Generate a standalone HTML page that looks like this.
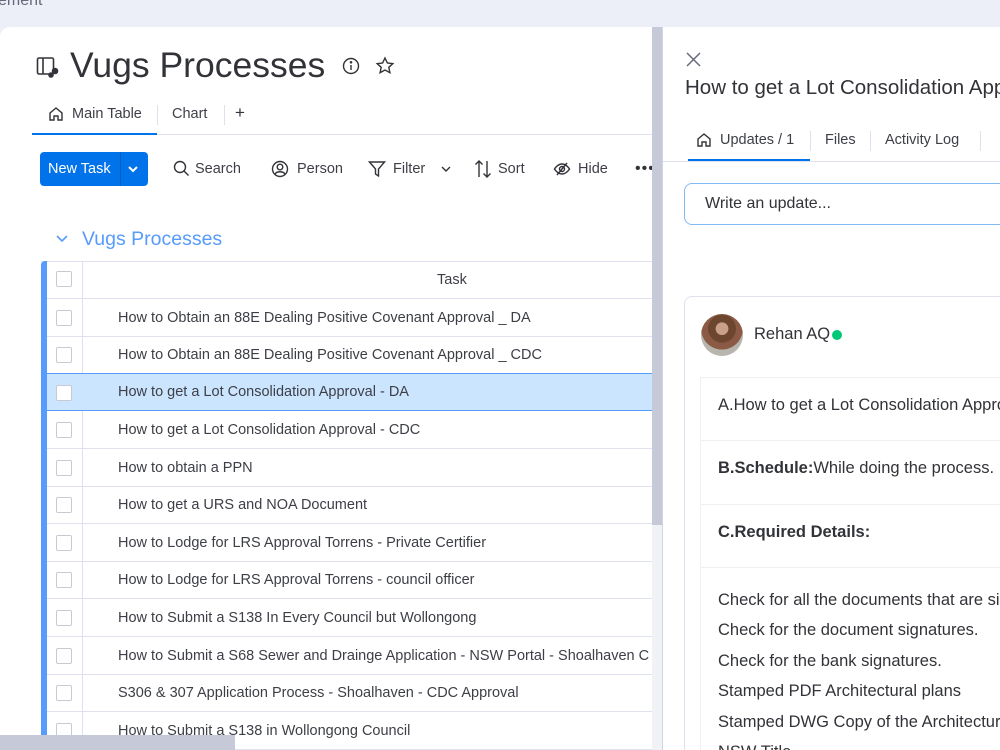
<!DOCTYPE html>
<html style="width:1000px;height:750px;overflow:hidden"><head><style>
*{box-sizing:border-box;margin:0;padding:0}
body{width:1000px;height:750px;overflow:hidden;background:#eceff8;font-family:"Liberation Sans",sans-serif;color:#323338}
#w{position:relative;width:1000px;height:750px;overflow:hidden}
.a{position:absolute}
.main{left:0;top:27px;width:662px;height:723px;background:#fff;border-top-left-radius:10px}
.row{position:absolute;left:41px;width:611px;border-bottom:1px solid #dfe1ee;height:38px;font-size:14.5px;color:#3d3f46}
.row .cb{position:absolute;left:15px;top:11px;width:16px;height:16px;border:1px solid #c7c9d4;border-radius:2px;background:#fff}
.row .div{position:absolute;left:41px;top:0;bottom:0;border-left:1px solid #dfe1ee}
.row .t{position:absolute;left:77px;top:11px;white-space:nowrap}
.tb{font-size:14.5px;color:#3d3f46}
.rp{position:absolute;left:718px;font-size:16.5px;white-space:nowrap;color:#323338}
</style></head><body><div id="w">
<div class="a" style="left:-2px;top:-8px;font-size:16px;color:#676879">ement</div>
<div class="a main"></div>
<svg class="a" style="left:36px;top:56px" width="24" height="22" viewBox="0 0 24 22" fill="none" stroke="#323338" stroke-width="1.6"><rect x="1.5" y="2" width="16" height="16" rx="1.5"/><line x1="7" y1="2" x2="7" y2="18"/><circle cx="19" cy="15" r="2.5" fill="#323338"/><circle cx="15" cy="19" r="2" fill="#323338"/></svg>
<div class="a" style="left:70px;top:45px;font-size:35.5px;color:#323338">Vugs Processes</div>
<svg class="a" style="left:342px;top:57px" width="18" height="18" viewBox="0 0 18 18" fill="none" stroke="#323338" stroke-width="1.4"><circle cx="9" cy="9" r="7.5"/><line x1="9" y1="8" x2="9" y2="13"/><circle cx="9" cy="5.3" r=".6" fill="#323338"/></svg>
<svg class="a" style="left:375px;top:56px" width="20" height="20" viewBox="0 0 20 20" fill="none" stroke="#323338" stroke-width="1.4"><path d="M10 2l2.4 5 5.4.6-4 3.7 1.1 5.4L10 14l-4.9 2.7 1.1-5.4-4-3.7 5.4-.6z"/></svg>
<svg class="a" style="left:48px;top:106px" width="16" height="16" viewBox="0 0 16 16" fill="none" stroke="#323338" stroke-width="1.4"><path d="M2 7l6-5 6 5v7H10V10H6v4H2z"/></svg>
<div class="a tb" style="left:72px;top:106px">Main Table</div>
<div class="a" style="left:157px;top:105px;height:20px;border-left:1px solid #dfe1ee"></div>
<div class="a tb" style="left:172px;top:106px">Chart</div>
<div class="a" style="left:224px;top:105px;height:20px;border-left:1px solid #dfe1ee"></div>
<div class="a" style="left:235px;top:103px;font-size:17px">+</div>
<div class="a" style="left:32px;top:134px;width:620px;border-top:1px solid #dfe1ee"></div>
<div class="a" style="left:32px;top:133px;width:125px;height:2px;background:#0073ea"></div>
<div class="a" style="left:40px;top:152px;width:108px;height:34px;background:#0073ea;border-radius:4px;color:#fff;font-size:14.5px">
<span class="a" style="left:8px;top:9px">New Task</span>
<span class="a" style="left:80px;top:0;height:34px;border-left:1px solid #0060c0"></span>
<svg class="a" style="left:87px;top:12px" width="12" height="10" viewBox="0 0 12 10" fill="none" stroke="#fff" stroke-width="2"><path d="M2 3l4 4 4-4"/></svg></div>
<svg class="a" style="left:173px;top:160px" width="17" height="17" viewBox="0 0 17 17" fill="none" stroke="#323338" stroke-width="1.4"><circle cx="7" cy="7" r="5.5"/><line x1="11" y1="11" x2="15.5" y2="15.5"/></svg>
<div class="a tb" style="left:195px;top:161px">Search</div>
<svg class="a" style="left:271px;top:160px" width="18" height="18" viewBox="0 0 18 18" fill="none" stroke="#323338" stroke-width="1.4"><circle cx="9" cy="9" r="7.5"/><circle cx="9" cy="7" r="2.8"/><path d="M4 14c2-3 8-3 10 0"/></svg>
<div class="a tb" style="left:297px;top:161px">Person</div>
<svg class="a" style="left:368px;top:160px" width="18" height="18" viewBox="0 0 18 18" fill="none" stroke="#323338" stroke-width="1.4"><path d="M1.5 2h15l-6 7v7l-3-2V9z"/></svg>
<div class="a tb" style="left:393px;top:161px">Filter</div>
<svg class="a" style="left:440px;top:165px" width="12" height="8" viewBox="0 0 12 8" fill="none" stroke="#323338" stroke-width="1.4"><path d="M2 2l4 4 4-4"/></svg>
<svg class="a" style="left:474px;top:159px" width="18" height="20" viewBox="0 0 18 20" fill="none" stroke="#323338" stroke-width="1.4"><path d="M5 18V2M1.5 5.5L5 2l3.5 3.5M13 2v16M9.5 14.5L13 18l3.5-3.5"/></svg>
<div class="a tb" style="left:498px;top:161px">Sort</div>
<svg class="a" style="left:553px;top:160px" width="18" height="18" viewBox="0 0 18 18" fill="none" stroke="#323338" stroke-width="1.4"><path d="M1.5 9s3-5 7.5-5 7.5 5 7.5 5-3 5-7.5 5-7.5-5-7.5-5z"/><circle cx="9" cy="9" r="2.5"/><line x1="14" y1="3" x2="4" y2="15"/></svg>
<div class="a tb" style="left:578px;top:161px">Hide</div>
<div class="a" style="left:635px;top:160px;font-size:16px;letter-spacing:1px">•••</div>
<svg class="a" style="left:55px;top:234px" width="14" height="10" viewBox="0 0 14 10" fill="none" stroke="#579bfc" stroke-width="1.6"><path d="M2 2l5 5 5-5"/></svg>
<div class="a" style="left:82px;top:228px;font-size:19.5px;color:#579bfc">Vugs Processes</div>
<div class="a" style="left:41px;top:261px;width:611px;border-top:1px solid #dfe1ee"></div>
<div class="row" style="top:262px;height:37px"><div class="cb" style="top:9px"></div><div class="div"></div><div class="t" style="left:396px;top:10px">Task</div></div>
<div class="row" style="top:299px"><div class="cb"></div><div class="div"></div><div class="t">How to Obtain an 88E Dealing Positive Covenant Approval _ DA</div></div>
<div class="row" style="top:336px"><div class="cb"></div><div class="div"></div><div class="t">How to Obtain an 88E Dealing Positive Covenant Approval _ CDC</div></div>
<div class="row" style="top:373px;background:#cce5ff;border-top:1px solid #579bfc;border-bottom:1px solid #579bfc"><div class="cb"></div><div class="div" style="border-color:#cce5ff"></div><div class="t" style="top:10px">How to get a Lot Consolidation Approval - DA</div></div>
<div class="row" style="top:411px"><div class="cb"></div><div class="div"></div><div class="t">How to get a Lot Consolidation Approval - CDC</div></div>
<div class="row" style="top:449px"><div class="cb"></div><div class="div"></div><div class="t">How to obtain a PPN</div></div>
<div class="row" style="top:486px"><div class="cb"></div><div class="div"></div><div class="t">How to get a URS and NOA Document</div></div>
<div class="row" style="top:524px"><div class="cb"></div><div class="div"></div><div class="t">How to Lodge for LRS Approval Torrens - Private Certifier</div></div>
<div class="row" style="top:561px"><div class="cb"></div><div class="div"></div><div class="t">How to Lodge for LRS Approval Torrens - council officer</div></div>
<div class="row" style="top:599px"><div class="cb"></div><div class="div"></div><div class="t">How to Submit a S138 In Every Council but Wollongong</div></div>
<div class="row" style="top:637px"><div class="cb"></div><div class="div"></div><div class="t">How to Submit a S68 Sewer and Drainge Application - NSW Portal - Shoalhaven C</div></div>
<div class="row" style="top:674px"><div class="cb"></div><div class="div"></div><div class="t">S306 &amp; 307 Application Process - Shoalhaven - CDC Approval</div></div>
<div class="row" style="top:712px"><div class="cb"></div><div class="div"></div><div class="t">How to Submit a S138 in Wollongong Council</div></div>
<div class="a" style="left:41px;top:261px;width:6px;height:489px;background:#579bfc;border-top-left-radius:4px"></div>
<div class="a" style="left:0;top:735px;width:235px;height:15px;background:#c5c9d8"></div>
<div class="a" style="left:652px;top:27px;width:10px;height:723px;background:#f1f2f6"></div>
<div class="a" style="left:652px;top:27px;width:10px;height:498px;background:#c5c9d8"></div>
<div class="a" style="left:662px;top:27px;width:338px;height:723px;background:#fff;border-left:1px solid #d0d4e4"></div>
<svg class="a" style="left:686px;top:52px" width="15" height="15" viewBox="0 0 15 15" stroke="#676879" stroke-width="1.5"><path d="M1 1l13 13M14 1L1 14"/></svg>
<div class="a" style="left:685px;top:76px;font-size:20.5px;white-space:nowrap;color:#323338">How to get a Lot Consolidation Approval - DA</div>
<svg class="a" style="left:696px;top:132px" width="16" height="16" viewBox="0 0 16 16" fill="none" stroke="#323338" stroke-width="1.4"><path d="M2 7l6-5 6 5v7H10V10H6v4H2z"/></svg>
<div class="a tb" style="left:720px;top:132px">Updates / 1</div>
<div class="a" style="left:810px;top:131px;height:20px;border-left:1px solid #dfe1ee"></div>
<div class="a tb" style="left:825px;top:132px">Files</div>
<div class="a" style="left:870px;top:131px;height:20px;border-left:1px solid #dfe1ee"></div>
<div class="a tb" style="left:885px;top:132px">Activity Log</div>
<div class="a" style="left:980px;top:131px;height:20px;border-left:1px solid #dfe1ee"></div>
<div class="a" style="left:663px;top:161px;width:337px;border-top:1px solid #dfe1ee"></div>
<div class="a" style="left:688px;top:159px;width:122px;height:2px;background:#0073ea"></div>
<div class="a" style="left:684px;top:183px;width:330px;height:42px;border:1px solid #80b9f4;border-radius:8px"></div>
<div class="a" style="left:705px;top:195px;font-size:16px;color:#323338">Write an update...</div>
<div class="a" style="left:684px;top:296px;width:330px;height:460px;border:1px solid #dfe1ee;border-radius:8px"></div>
<div class="a" style="left:701px;top:314px;width:42px;height:42px;border-radius:50%;background:radial-gradient(circle at 50% 35%,#c9a088 0 18%,#6d4630 19% 40%,#8a5a44 41% 60%,#b8b4ae 61%)"></div>
<div class="a" style="left:754px;top:325px;font-size:16.5px">Rehan AQ</div>
<div class="a" style="left:832px;top:330px;width:10px;height:10px;border-radius:50%;background:#00c875"></div>
<div class="a" style="left:700px;top:377px;width:314px;height:380px;border:1px solid #eef0f4"></div>
<div class="a" style="left:700px;top:440px;width:314px;border-top:1px solid #eef0f4"></div>
<div class="a" style="left:700px;top:504px;width:314px;border-top:1px solid #eef0f4"></div>
<div class="a" style="left:700px;top:567px;width:314px;border-top:1px solid #eef0f4"></div>
<div class="rp" style="top:396px">A.How to get a Lot Consolidation Approval</div>
<div class="rp" style="top:459px"><b>B.Schedule:</b>While doing the process.</div>
<div class="rp" style="top:523px"><b>C.Required Details:</b></div>
<div class="rp" style="top:585px;line-height:30.4px">Check for all the documents that are signed<br>Check for the document signatures.<br>Check for the bank signatures.<br>Stamped PDF Architectural plans<br>Stamped DWG Copy of the Architectural plans<br>NSW Title</div>
</div></body></html>
